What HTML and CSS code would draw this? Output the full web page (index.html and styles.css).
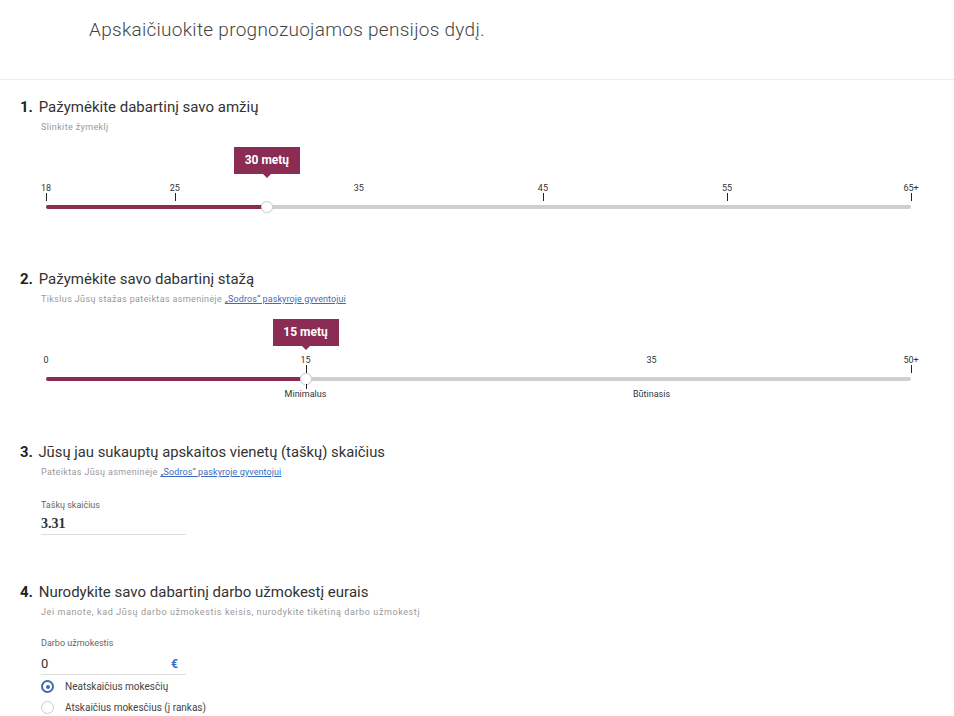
FILE: index.html
```html
<!DOCTYPE html>
<html lang="lt">
<head>
    <meta charset="UTF-8">
    <meta name="viewport" content="width=device-width, initial-scale=1.0">
    <title>Pensijos skaičiuoklė</title>
    <link rel="stylesheet" href="styles.css">
</head>
<body>
    <div class="head">
        <h1>Apskaičiuokite prognozuojamos pensijos dydį.</h1>
    </div>

    <div class="step">
        <h2><b>1.</b> Pažymėkite dabartinį savo amžių</h2>
        <p class="hint">Slinkite žymeklį</p>
        <div class="scale">
            <div class="bubble" style="left:25.532%">30 metų</div>
            <span class="num" style="left:0%">18</span><i class="tick" style="left:0%"></i>
            <span class="num" style="left:14.894%">25</span><i class="tick" style="left:14.894%"></i>
            <span class="num" style="left:36.17%">35</span>
            <span class="num" style="left:57.447%">45</span><i class="tick" style="left:57.447%"></i>
            <span class="num" style="left:78.723%">55</span><i class="tick" style="left:78.723%"></i>
            <span class="num" style="left:100%">65+</span><i class="tick" style="left:100%"></i>
            <div class="track"><div class="fill" style="width:25.532%"></div></div>
            <div class="thumb" style="left:25.532%"></div>
        </div>
    </div>

    <div class="step">
        <h2><b>2.</b> Pažymėkite savo dabartinį stažą</h2>
        <p class="hint">Tikslus Jūsų stažas pateiktas asmeninėje <a href="#">„Sodros“ paskyroje gyventojui</a></p>
        <div class="scale">
            <div class="bubble" style="left:30%">15 metų</div>
            <span class="num" style="left:0%">0</span>
            <span class="num" style="left:30%">15</span><i class="tick" style="left:30%"></i>
            <span class="num" style="left:70%">35</span>
            <span class="num" style="left:100%">50+</span><i class="tick" style="left:100%"></i>
            <div class="track"><div class="fill" style="width:30%"></div></div>
            <div class="thumb" style="left:30%"></div>
            <i class="tick low" style="left:30%"></i>
            <span class="num under" style="left:30%">Minimalus</span>
            <span class="num under" style="left:70%">Būtinasis</span>
        </div>
    </div>

    <div class="step points">
        <h2><b>3.</b> Jūsų jau sukauptų apskaitos vienetų (taškų) skaičius</h2>
        <p class="hint">Pateiktas Jūsų asmeninėje <a href="#">„Sodros“ paskyroje gyventojui</a></p>
        <div class="field">
            <label>Taškų skaičius</label>
            <div class="value bold">3.31</div>
        </div>
    </div>

    <div class="step last">
        <h2><b>4.</b> Nurodykite savo dabartinį darbo užmokestį eurais</h2>
        <p class="hint wide">Jei manote, kad Jūsų darbo užmokestis keisis, nurodykite tikėtiną darbo užmokestį</p>
        <div class="field">
            <label>Darbo užmokestis</label>
            <div class="value">0<span class="eur">€</span></div>
        </div>
        <div class="radio on"><span class="dot"></span>Neatskaičius mokesčių</div>
        <div class="radio"><span class="dot"></span>Atskaičius mokesčius (į rankas)</div>
    </div>
</body>
</html>
```

FILE: styles.css
```css
body {
    margin: 0;
    font-family: Roboto, "Noto Sans", sans-serif;
    color: #333;
    background: #fff;
}
.head {
    height: 79px;
    border-bottom: 1px solid #eee;
    padding-left: 89px;
}
.head h1 {
    margin: 0;
    padding-top: 19px;
    font-size: 19px;
    line-height: 22px;
    font-weight: 300;
    color: #444;
    letter-spacing: 0.28px;
}
.step {
    padding: 0 43px 0 20px;
    margin-top: 17px;
    margin-bottom: 32px;
}
.step + .step {
    margin-top: 0;
}
.step.points {
    padding-top: 1px;
    margin-bottom: 47px;
}
.step h2 {
    margin: 0;
    font-size: 15px;
    line-height: 20px;
    font-weight: 400;
    color: #333;
}
.step.points h2 {
    font-size: 14.8px;
}
.step h2 b {
    font-weight: 700;
    color: #222;
    margin-right: 2px;
}
.hint {
    margin: 4px 0 0 21px;
    font-size: 9px;
    line-height: 12px;
    color: #999;
    letter-spacing: 0.37px;
}
.hint.wide {
    margin-top: 4px;
    letter-spacing: 0.6px;
}
.hint a {
    color: #3a6cbd;
    letter-spacing: 0.1px;
}
.scale {
    position: relative;
    height: 90px;
    margin: 14px 0 0 26px;
}
.bubble {
    position: absolute;
    top: 0;
    transform: translateX(-50%);
    width: 66px;
    height: 27px;
    line-height: 27px;
    text-align: center;
    background: #8a2c54;
    color: #fff;
    font-size: 12px;
    font-weight: 700;
}
.bubble:after {
    content: "";
    position: absolute;
    left: 50%;
    bottom: -4px;
    margin-left: -4px;
    border-left: 4px solid transparent;
    border-right: 4px solid transparent;
    border-top: 4px solid #8a2c54;
}
.num {
    position: absolute;
    top: 36px;
    transform: translateX(-50%);
    font-size: 9px;
    line-height: 10px;
    color: #333;
}
.num.under {
    top: 70px;
}
.tick {
    position: absolute;
    top: 46px;
    width: 1px;
    height: 8px;
    background: #222;
}
.tick.low {
    top: 65px;
    height: 5px;
}
.track {
    position: absolute;
    top: 58px;
    left: 0;
    right: 0;
    height: 4px;
    border-radius: 2px;
    background: #cfcfcf;
}
.fill {
    height: 100%;
    border-radius: 2px 0 0 2px;
    background: #8a2c54;
}
.thumb {
    position: absolute;
    top: 54px;
    width: 12px;
    height: 12px;
    margin-left: -6px;
    border-radius: 50%;
    background: #fff;
    border: 1px solid #d5d5d5;
    box-sizing: border-box;
    box-shadow: 0 0 1px rgba(0,0,0,0.2);
}
.field {
    margin: 21px 0 0 21px;
    width: 145px;
}
.step.last .field {
    margin-top: 19px;
}
.field label {
    display: block;
    font-size: 9px;
    line-height: 12px;
    color: #666;
}
.value {
    position: relative;
    margin-top: 3px;
    height: 20px;
    line-height: 20px;
    font-size: 13px;
    color: #333;
    border-bottom: 1px solid #ddd;
}
.step.last .value {
    margin-top: 5px;
}
.value.bold {
    font-family: "Liberation Serif", serif;
    font-weight: 700;
    font-size: 14px;
}
.eur {
    position: absolute;
    right: 8px;
    color: #3a6cbd;
    font-weight: 700;
    font-size: 12px;
}
.radio {
    display: flex;
    align-items: center;
    height: 21px;
    margin-left: 21px;
    font-size: 10px;
    color: #444;
}
.step.last .field + .radio {
    margin-top: 1px;
}
.dot {
    width: 13px;
    height: 13px;
    box-sizing: border-box;
    border-radius: 50%;
    border: 1px solid #ccc;
    margin-right: 11px;
    position: relative;
}
.radio.on .dot {
    border: 2px solid #3d6bb0;
}
.radio.on .dot:after {
    content: "";
    position: absolute;
    top: 2.5px;
    left: 2.5px;
    width: 4px;
    height: 4px;
    border-radius: 50%;
    background: #3d6bb0;
}
```
